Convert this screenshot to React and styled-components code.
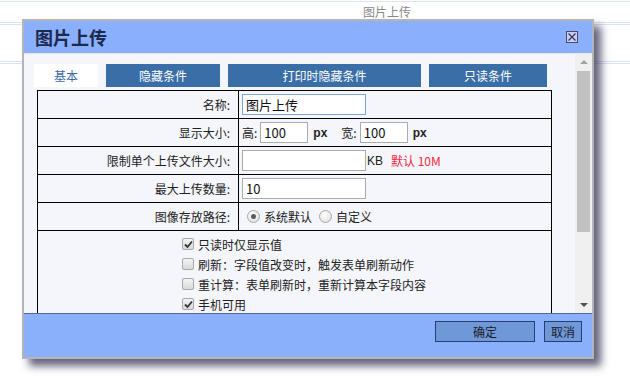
import React from 'react'
import styled, { createGlobalStyle } from 'styled-components'

const GlobalStyle = createGlobalStyle`
  body {
    margin: 0;
    background: #ffffff;
    font-family: "Noto Sans CJK SC", "Noto Sans", sans-serif;
  }
`

const Page = styled.div`
  position: relative;
  width: 630px;
  height: 380px;
  overflow: hidden;
`

const TopRule = styled.div`
  height: 1px;
  margin-top: 1px;
  background: #dde4f1;
`

const PageTitle = styled.div`
  height: 20px;
  line-height: 20px;
  padding-left: 363px;
  font-size: 12px;
  color: #8a8a8a;
`

const DoubleRule = styled.div`
  height: 1px;
  border-top: 1px solid #dce3f0;
  border-bottom: 1px solid #dce3f0;
  margin-bottom: ${(p) => p.$after || 0}px;
`

const Dialog = styled.div`
  position: absolute;
  left: 22px;
  top: 19px;
  width: 572px;
  box-sizing: border-box;
  border: 2px solid #b5b5b5;
  box-shadow: 7px 7px 8px rgba(45, 45, 80, 0.75);
  display: flex;
  flex-direction: column;
`

const TitleBar = styled.div`
  height: 32px;
  background: #8aaffc;
  border-bottom: 1px solid #ebe8d2;
  display: flex;
  align-items: center;
  justify-content: space-between;
  padding: 0 14px 0 11px;
`

const Title = styled.h1`
  margin: 0;
  font-size: 18px;
  font-weight: bold;
  color: #1b2a4d;
  line-height: 32px;
`

const Close = styled.span`
  width: 12px;
  height: 12px;
  box-sizing: border-box;
  border: 1px solid #4d4d6b;
  background: #c9cdf4;
  display: flex;
  align-items: center;
  justify-content: center;
`

const Body = styled.div`
  height: 259px;
  display: flex;
  background: #f5f6fb;
`

const Content = styled.div`
  flex: 1;
  padding: 10px 0 0 10px;
  overflow: hidden;
`

const Tabs = styled.div`
  display: flex;
  gap: 8px;
  height: 23px;
`

const Tab = styled.div`
  width: ${(p) => p.$w}px;
  height: 23px;
  line-height: 23px;
  text-align: center;
  font-size: 12px;
  background: ${(p) => (p.$active ? '#ffffff' : '#3a6ea6')};
  color: ${(p) => (p.$active ? '#3d6aa2' : '#ffffff')};
`

const Form = styled.div`
  margin: 3px 0 0 3px;
  width: 515px;
  box-sizing: border-box;
  border-left: 1px solid #000;
  border-top: 1px solid #000;
  display: grid;
  grid-template-columns: 201px 313px;
`

const Label = styled.div`
  height: 28px;
  box-sizing: border-box;
  border-right: 1px solid #000;
  border-bottom: 1px solid #000;
  text-align: right;
  padding-right: 8px;
  line-height: 27px;
  font-size: 12px;
  color: #222;
`

const Value = styled.div`
  height: 28px;
  box-sizing: border-box;
  border-right: 1px solid #000;
  border-bottom: 1px solid #000;
  padding-left: 3px;
  display: flex;
  align-items: center;
  font-size: 12px;
  color: #222;
`

const Options = styled.div`
  grid-column: 1 / 3;
  height: 120px;
  box-sizing: border-box;
  border-right: 1px solid #000;
  padding: 3px 0 0 144px;
  display: flex;
  flex-direction: column;
`

const Field = styled.input`
  width: ${(p) => p.$w}px;
  height: 21px;
  box-sizing: border-box;
  margin: 0 0 0 ${(p) => p.$ml || 0}px;
  padding: 0 3px;
  border: 1px solid ${(p) => (p.$focus ? '#7ea4d6' : '#ababab')};
  background: #fff;
  font-family: "Noto Sans CJK SC", "Noto Sans", sans-serif;
  font-size: 13px;
  color: #111;
  outline: none;
`

const Text = styled.span`
  margin-left: ${(p) => p.$ml || 0}px;
  font-size: 12px;
  font-weight: ${(p) => (p.$bold ? 'bold' : 'normal')};
  font-family: ${(p) =>
    p.$latin ? '"Liberation Sans", Arial, sans-serif' : 'inherit'};
  color: ${(p) => (p.$red ? '#f5283a' : '#222')};
`

const Radio = styled.span`
  width: 13px;
  height: 13px;
  box-sizing: border-box;
  margin-left: ${(p) => p.$ml || 0}px;
  border-radius: 50%;
  border: 1px solid #a8a8a8;
  background: radial-gradient(circle at 40% 35%, #ffffff, #dadada);
  display: flex;
  align-items: center;
  justify-content: center;
  &::after {
    content: '';
    width: 5px;
    height: 5px;
    border-radius: 50%;
    background: ${(p) => (p.$on ? '#5a5a5a' : 'transparent')};
  }
`

const OptionLine = styled.div`
  height: 20px;
  display: flex;
  align-items: center;
  gap: 4px;
  font-size: 12px;
  color: #222;
`

const Box = styled.span`
  width: 12px;
  height: 12px;
  box-sizing: border-box;
  border: 1px solid #a9a9a9;
  border-radius: 2px;
  background: linear-gradient(#f4f4f4, #d9d9d9);
  display: flex;
  align-items: center;
  justify-content: center;
`

const Scrollbar = styled.div`
  width: 17px;
  background: #f0f0f0;
  display: flex;
  flex-direction: column;
  align-items: center;
`

const Arrow = styled.span`
  width: 0;
  height: 0;
  margin: ${(p) => (p.$down ? '0 0 6px' : '6px 0 0')};
  border-left: 4px solid transparent;
  border-right: 4px solid transparent;
  ${(p) =>
    p.$down
      ? 'border-top: 4px solid #505050;'
      : 'border-bottom: 4px solid #a3a3a3;'}
`

const Thumb = styled.div`
  width: 13px;
  height: 161px;
  margin-top: 7px;
  background: #c1c1c1;
`

const Track = styled.div`
  flex: 1;
`

const Footer = styled.div`
  height: 36px;
  background: #8ab0fc;
  border-top: 1px solid #53689e;
  display: flex;
  justify-content: flex-end;
  align-items: flex-start;
  gap: 9px;
  padding: 7px 10px 0 0;
`

const Button = styled.button`
  width: ${(p) => p.$w}px;
  height: 21px;
  box-sizing: border-box;
  padding: 0;
  border: 1px solid #263f70;
  background: #6f98d9;
  font-family: "Noto Sans CJK SC", sans-serif;
  font-size: 12px;
  color: #1c1c2c;
`

const Check = ({ on }) => (
  <Box>
    {on && (
      <svg width="9" height="9" viewBox="0 0 9 9">
        <path d="M1 4.5 L3.5 7 L8 1.5" fill="none" stroke="#333" strokeWidth="1.8" />
      </svg>
    )}
  </Box>
)

const options = [
  { text: '只读时仅显示值', on: true },
  { text: '刷新：字段值改变时，触发表单刷新动作', on: false },
  { text: '重计算：表单刷新时，重新计算本字段内容', on: false },
  { text: '手机可用', on: true },
]

export default function App() {
  return (
    <Page>
      <GlobalStyle />
      <TopRule />
      <PageTitle>图片上传</PageTitle>
      <DoubleRule $after={36} />
      <DoubleRule />

      <Dialog>
        <TitleBar>
          <Title>图片上传</Title>
          <Close>
            <svg width="10" height="10" viewBox="0 0 10 10">
              <path d="M1.5 1.5 L8.5 8.5 M8.5 1.5 L1.5 8.5" stroke="#3c3c58" strokeWidth="1.3" />
            </svg>
          </Close>
        </TitleBar>

        <Body>
          <Content>
            <Tabs>
              <Tab $w={64} $active>基本</Tab>
              <Tab $w={114}>隐藏条件</Tab>
              <Tab $w={193}>打印时隐藏条件</Tab>
              <Tab $w={118}>只读条件</Tab>
            </Tabs>

            <Form>
              <Label>名称:</Label>
              <Value>
                <Field $w={124} $focus readOnly value="图片上传" />
              </Value>

              <Label>显示大小:</Label>
              <Value>
                <Text>高:</Text>
                <Field $w={48} $ml={3} readOnly value="100" />
                <Text $ml={5} $bold $latin>px</Text>
                <Text $ml={14}>宽:</Text>
                <Field $w={48} $ml={3} readOnly value="100" />
                <Text $ml={5} $bold $latin>px</Text>
              </Value>

              <Label>限制单个上传文件大小:</Label>
              <Value>
                <Field $w={124} readOnly value="" />
                <Text $ml={1} $latin>KB</Text>
                <Text $ml={8} $red>默认 10M</Text>
              </Value>

              <Label>最大上传数量:</Label>
              <Value>
                <Field $w={124} readOnly value="10" />
              </Value>

              <Label>图像存放路径:</Label>
              <Value>
                <Radio $ml={5} $on />
                <Text $ml={4}>系统默认</Text>
                <Radio $ml={7} />
                <Text $ml={4}>自定义</Text>
              </Value>

              <Options>
                {options.map((o) => (
                  <OptionLine key={o.text}>
                    <Check on={o.on} />
                    <span>{o.text}</span>
                  </OptionLine>
                ))}
              </Options>
            </Form>
          </Content>

          <Scrollbar>
            <Arrow />
            <Thumb />
            <Track />
            <Arrow $down />
          </Scrollbar>
        </Body>

        <Footer>
          <Button $w={100}>确定</Button>
          <Button $w={38}>取消</Button>
        </Footer>
      </Dialog>
    </Page>
  )
}
